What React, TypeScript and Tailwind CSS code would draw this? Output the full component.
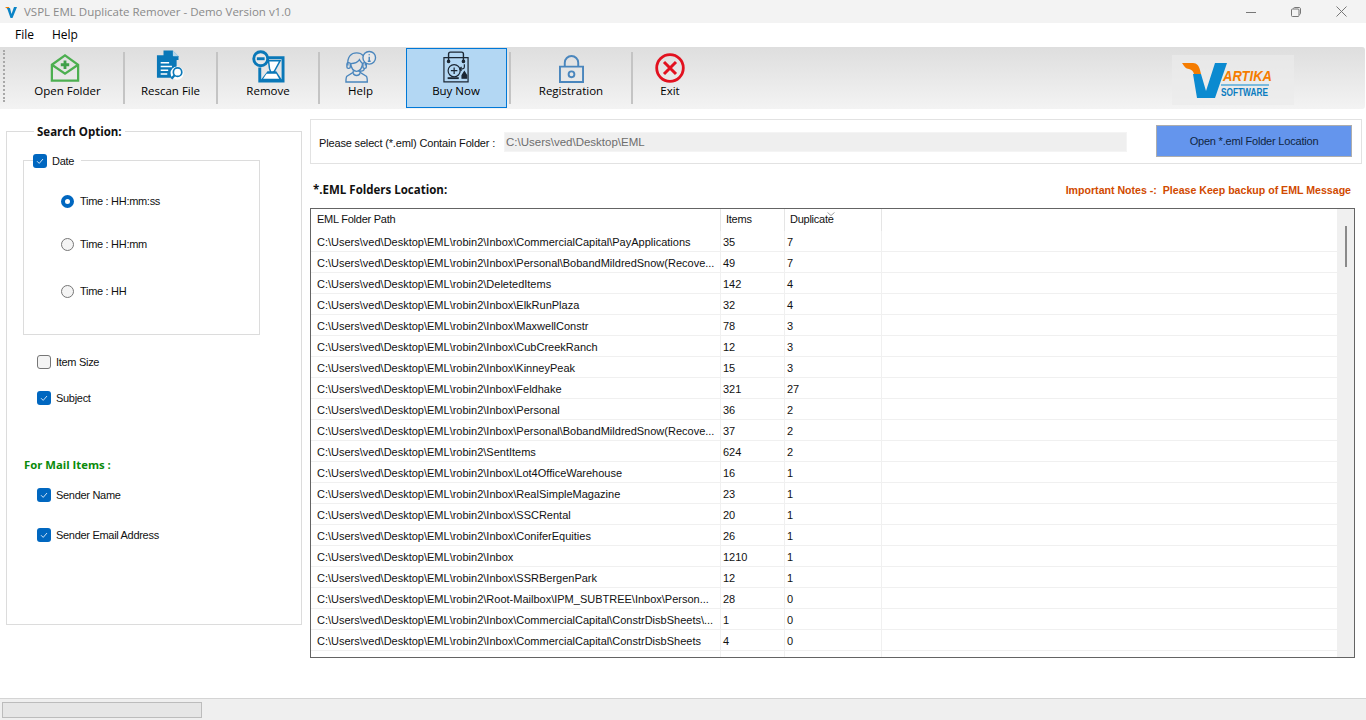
import type { ReactNode } from 'react';

const ROOT = 'C:\\Users\\ved\\Desktop\\EML\\robin2\\';

const ROWS: [string, string, string][] = [
  ['Inbox\\CommercialCapital\\PayApplications', '35', '7'],
  ['Inbox\\Personal\\BobandMildredSnow(Recove...', '49', '7'],
  ['DeletedItems', '142', '4'],
  ['Inbox\\ElkRunPlaza', '32', '4'],
  ['Inbox\\MaxwellConstr', '78', '3'],
  ['Inbox\\CubCreekRanch', '12', '3'],
  ['Inbox\\KinneyPeak', '15', '3'],
  ['Inbox\\Feldhake', '321', '27'],
  ['Inbox\\Personal', '36', '2'],
  ['Inbox\\Personal\\BobandMildredSnow(Recove...', '37', '2'],
  ['SentItems', '624', '2'],
  ['Inbox\\Lot4OfficeWarehouse', '16', '1'],
  ['Inbox\\RealSimpleMagazine', '23', '1'],
  ['Inbox\\SSCRental', '20', '1'],
  ['Inbox\\ConiferEquities', '26', '1'],
  ['Inbox', '1210', '1'],
  ['Inbox\\SSRBergenPark', '12', '1'],
  ['Root-Mailbox\\IPM_SUBTREE\\Inbox\\Person...', '28', '0'],
  ['Inbox\\CommercialCapital\\ConstrDisbSheets\\...', '1', '0'],
  ['Inbox\\CommercialCapital\\ConstrDisbSheets', '4', '0'],
];

function AppLogo() {
  return (
    <svg width="14" height="14" viewBox="0 0 14 14" className="ml-[4px]">
      <path d="M1 2h4l1 3-1 0z" fill="#f57c00" />
      <path d="M3 3h3l1.500 6L10 2h3L8.500 13H6.500z" fill="#0b84c6" />
    </svg>
  );
}

function OpenFolderIcon() {
  return (
    <svg width="30" height="30" viewBox="0 0 32 32" fill="none" stroke="#4caf50" strokeWidth="2.400" className="mr-[6px]">
      <path d="M2 12.500 16 2.500l14 10v17H2z" />
      <path d="M2 12.500 16 22l14-9.500" />
      <path d="M16 8v9M11.500 12.500h9" strokeWidth="3" stroke="#3f9f4a" />
    </svg>
  );
}

function RescanIcon() {
  return (
    <svg width="30" height="33" viewBox="0 0 32 34">
      <path d="M8 0h10l6 6v4H8z" fill="#0a78b8" />
      <path d="M18 0l6 6h-6z" fill="#fff" opacity="0.7" />
      <path d="M1 5h16l5 5v19H1z" fill="#0a78b8" />
      <path d="M5 13h9M5 17h12M5 21h8M5 25h7" stroke="#fff" strokeWidth="1.800" />
      <circle cx="22.500" cy="24" r="7" fill="#fff" />
      <circle cx="23" cy="23" r="4.500" fill="none" stroke="#0a78b8" strokeWidth="1.800" />
      <path d="M19.500 26.500 16.500 30" stroke="#0a78b8" strokeWidth="2.400" />
    </svg>
  );
}

function RemoveIcon() {
  return (
    <svg width="33" height="33" viewBox="0 0 34 34" fill="none">
      <path d="M12 8h20v24H8V18" stroke="#0a78b8" strokeWidth="3" />
      <path d="M17 11h12l-6 11-3 3-2-6z" fill="#fff" stroke="#0a78b8" strokeWidth="1.500" />
      <path d="M9 31l7-9h9l6 9z" fill="#0a78b8" />
      <path d="M15 24.500h10l3 5H11.500z" fill="#fff" />
      <circle cx="9" cy="9" r="7.200" fill="#e9e9e9" stroke="#0a78b8" strokeWidth="3" />
      <path d="M5 9h8" stroke="#0a78b8" strokeWidth="3" />
    </svg>
  );
}

function HelpIcon() {
  return (
    <svg width="33" height="33" viewBox="0 0 34 34" fill="none" stroke="#4a86bd" strokeWidth="1.400">
      <path d="M4 16C3 6 8 3 13 3s10 3 9 13" />
      <path d="M7 14c3 0 7-1 9-4 1 2 2 3 3 4 0 5-3 8-6 8s-6-3-6-8z" />
      <rect x="3" y="13" width="3.500" height="6" rx="1.500" />
      <rect x="19.500" y="13" width="3.500" height="6" rx="1.500" />
      <path d="M21 19c0 2-2 3-6 3" />
      <path d="M9.500 21v2L3 27c-1 1-1 4-1 6h22c0-2 0-5-1-6l-6.500-4v-2" />
      <path d="M9.500 24c1 3 6 3 7 0" />
      <circle cx="26" cy="8" r="6.500" fill="#e9e9e9" />
      <path d="M26 7v4.500M26 4.500v1M24.500 11.500h3" strokeWidth="1.500" />
    </svg>
  );
}

function BuyNowIcon() {
  return (
    <svg width="26" height="32" viewBox="0 0 28 34" fill="none" stroke="#1c2733" strokeWidth="1.300">
      <path d="M1 7h26v26H1z" />
      <path d="M6 11V3c0-1 1-2 2-2h12c1 0 2 1 2 2v8" strokeWidth="1.500" />
      <circle cx="6" cy="11" r="1.300" fill="#1c2733" />
      <circle cx="22" cy="11" r="1.300" fill="#1c2733" />
      <circle cx="12" cy="21" r="6.500" />
      <path d="M12 17.500v7M8.500 21h7" />
      <path d="M23 14v3c0 1-1 2-2 2h-3M20 17l-2 2 2 2" />
      <path d="M23 22l2.500 4v3h-5v-3z" fill="#1c2733" />
      <path d="M5 29h12" strokeWidth="2" />
    </svg>
  );
}

function LockIcon() {
  return (
    <svg width="25" height="28" viewBox="0 0 26 29" fill="none" stroke="#4a86bd" strokeWidth="2">
      <path d="M1 12h24v16H1z" />
      <path d="M6 12V8a7 7 0 0 1 14 0v4" />
      <circle cx="13" cy="20" r="3" />
    </svg>
  );
}

function ExitIcon() {
  return (
    <svg width="30" height="30" viewBox="0 0 30 30" fill="none" stroke="#e2111f" strokeWidth="2.800">
      <circle cx="15" cy="15" r="13.300" />
      <path d="M9 9l12 12M21 9 9 21" strokeWidth="3" />
    </svg>
  );
}

function VartikaLogo() {
  return (
    <svg width="122" height="50" viewBox="0 0 122 50">
      <rect width="122" height="50" fill="#ebebeb" opacity="0.7" />
      <path d="M10 8h11c4 0 6 3 7 7l1 4h-7c-1-3-2-4-5-5-3 0-5-3-7-6z" fill="#f57c00" />
      <path d="M21 19h8l5 17L43 8h12L43 43H25z" fill="#0b8ad0" />
      <text x="51" y="26" fontFamily="'Liberation Sans', sans-serif" fontSize="14.500" fontWeight="700" fontStyle="italic" fill="#f57c00" textLength="49" lengthAdjust="spacingAndGlyphs">ARTIKA</text>
      <path d="M49 30h48" stroke="#0b8ad0" strokeWidth="1.200" />
      <text x="49" y="41" fontFamily="'Liberation Sans', sans-serif" fontSize="11" fontWeight="700" fill="#0b7cc0" textLength="47" lengthAdjust="spacingAndGlyphs">SOFTWARE</text>
    </svg>
  );
}

function Tool({ label, icon, className }: { label: string; icon: ReactNode; className: string }) {
  return (
    <div className={`flex h-full shrink-0 flex-col items-center ${className}`}>
      <div className="flex h-[36px] items-end">{icon}</div>
      <span className="font-['Open_Sans',sans-serif] text-[11.500px] leading-[16px] text-black">{label}</span>
    </div>
  );
}

function Sep() {
  return <div className="my-[5px] h-[52px] w-[2px] shrink-0 bg-[#c4c4c4]" />;
}

function Check({ on, label }: { on: boolean; label: string }) {
  return (
    <div className="flex h-[16px] items-center gap-[5px]">
      <span
        className={
          on
            ? 'flex h-[14px] w-[14px] items-center justify-center rounded-[3px] bg-[#0067c0]'
            : 'h-[14px] w-[14px] rounded-[3px] border border-[#767676] bg-[#f4f4f4]'
        }
      >
        {on && (
          <svg width="10" height="10" viewBox="0 0 10 10" fill="none" stroke="#cfe3f5" strokeWidth="1">
            <path d="M2 5.200 4.200 7.400 8 3" />
          </svg>
        )}
      </span>
      <span className="text-[11px] leading-[16px] tracking-[-0.3px] text-[#111]">{label}</span>
    </div>
  );
}

function Radio({ on, label, className }: { on: boolean; label: string; className: string }) {
  return (
    <div className={`ml-[37px] flex h-[16px] items-center gap-[6px] ${className}`}>
      <span
        className={
          on
            ? 'h-[13px] w-[13px] rounded-full border-[4px] border-[#0067c0] bg-white'
            : 'h-[13px] w-[13px] rounded-full border border-[#767676] bg-[#f4f4f4]'
        }
      />
      <span className="text-[11px] leading-[16px] tracking-[-0.3px] text-[#111]">{label}</span>
    </div>
  );
}

function SearchPanel() {
  return (
    <fieldset className="ml-[6px] h-[502px] w-[296px] shrink-0 border border-[#dcdcdc] pl-[16px]">
      <legend className="ml-[11px] translate-y-[1px] px-[3px] font-['Open_Sans',sans-serif] text-[11.500px] font-bold leading-[16px] text-[#111]">
        Search Option:
      </legend>
      <fieldset className="mt-[13px] h-[183px] w-[237px] border border-[#dcdcdc]">
        <legend className="ml-[9px] translate-y-[1px] pr-[7px]">
          <Check on label="Date" />
        </legend>
        <Radio on label="Time : HH:mm:ss" className="mt-[25px]" />
        <Radio on={false} label="Time : HH:mm" className="mt-[27px]" />
        <Radio on={false} label="Time : HH" className="mt-[31px]" />
      </fieldset>
      <div className="ml-[14px] mt-[19px]">
        <Check on={false} label="Item Size" />
      </div>
      <div className="ml-[14px] mt-[20px]">
        <Check on label="Subject" />
      </div>
      <div className="ml-[1px] mt-[51px] font-['Open_Sans',sans-serif] text-[11.300px] font-bold leading-[16px] text-[#0a8a0a]">
        For Mail Items :
      </div>
      <div className="ml-[14px] mt-[14px]">
        <Check on label="Sender Name" />
      </div>
      <div className="ml-[14px] mt-[24px]">
        <Check on label="Sender Email Address" />
      </div>
    </fieldset>
  );
}

function Row({ path, items, dup }: { path: string; items: string; dup: string }) {
  return (
    <div className="flex h-[21px] shrink-0 border-b border-[#f0f0f0] text-[11px] leading-[23px] text-[#111]">
      <div className="w-[410px] shrink-0 whitespace-nowrap border-r border-[#f0f0f0] pl-[6px]">{path}</div>
      <div className="w-[64px] shrink-0 border-r border-[#f0f0f0] pl-[2px]">{items}</div>
      <div className="w-[97px] shrink-0 border-r border-[#f0f0f0] pl-[2px]">{dup}</div>
    </div>
  );
}

function FolderTable() {
  return (
    <div className="mt-[10px] flex h-[450px] w-[1045px] border border-[#646464] bg-white">
      <div className="flex min-w-0 flex-1 flex-col overflow-hidden">
        <div className="flex h-[22px] shrink-0 text-[11px] leading-[21px] tracking-[-0.25px] text-[#111]">
          <div className="w-[410px] shrink-0 border-r border-[#e5e5e5] pl-[6px]">EML Folder Path</div>
          <div className="w-[64px] shrink-0 border-r border-[#e5e5e5] pl-[5px]">Items</div>
          <div className="relative w-[97px] shrink-0 border-r border-[#e5e5e5] pl-[5px]">
            Duplicate
            <svg width="8" height="4" viewBox="0 0 8 4" fill="none" stroke="#8a8a8a" className="absolute left-[42px] top-[3px]">
              <path d="M0.500 0.500 4 3.500 7.500 0.500" strokeWidth="0.800" />
            </svg>
          </div>
        </div>
        {ROWS.map((r, i) => (
          <Row key={i} path={ROOT + r[0]} items={r[1]} dup={r[2]} />
        ))}
        <Row path="" items="" dup="" />
      </div>
      <div className="flex w-[17px] shrink-0 justify-center bg-[#f0f0f0] pt-[17px]">
        <div className="h-[41px] w-[2px] bg-[#8a8a8a]" />
      </div>
    </div>
  );
}

export default function App() {
  return (
    <div className="flex h-[720px] w-[1366px] flex-col overflow-hidden bg-white font-['Liberation_Sans',sans-serif]">
      {/* title bar */}
      <div className="flex h-[23px] shrink-0 items-center bg-[#f3f3f3]">
        <AppLogo />
        <span className="ml-[6px] font-['Open_Sans',sans-serif] text-[11.500px] text-[#8a8a8a]">
          VSPL EML Duplicate Remover - Demo Version v1.0
        </span>
        <div className="ml-auto flex items-center gap-[35px] pr-[19px]">
          <svg width="10" height="10" viewBox="0 0 10 10" stroke="#777" fill="none">
            <path d="M0 5.500h10" />
          </svg>
          <svg width="10" height="10" viewBox="0 0 10 10" stroke="#777" fill="none">
            <rect x="0.500" y="2" width="7.500" height="7.500" rx="1" />
            <path d="M2.500 1.500c0-.5.500-1 1-1h4.500c1 0 1.500.5 1.500 1.500v4.500c0 .5-.5 1-1 1" />
          </svg>
          <svg width="11" height="11" viewBox="0 0 11 11" stroke="#777" fill="none">
            <path d="M0.500 0.500l10 10M10.500 0.500l-10 10" />
          </svg>
        </div>
      </div>

      {/* menu */}
      <div className="flex h-[24px] shrink-0 items-center gap-[18px] pl-[15px] font-['Open_Sans',sans-serif] text-[12px] text-black">
        <span>File</span>
        <span>Help</span>
      </div>

      {/* toolbar */}
      <div className="flex h-[62px] w-[1365px] shrink-0 items-stretch rounded-r-[3px] bg-gradient-to-b from-[#dedede] to-[#f3f3f3]">
        <div className="my-[3px] ml-[3px] h-[52px] w-[2px] shrink-0 border-l-2 border-dotted border-[#a8a8a8]" />
        <Tool label="Open Folder" icon={<OpenFolderIcon />} className="w-[118px] pl-[7px]" />
        <Sep />
        <Tool label="Rescan File" icon={<RescanIcon />} className="w-[91px]" />
        <Sep />
        <Tool label="Remove" icon={<RemoveIcon />} className="w-[100px]" />
        <Sep />
        <Tool label="Help" icon={<HelpIcon />} className="w-[81px]" />
        <div className="ml-[5px] mt-[1px] h-[60px] w-[101px] shrink-0 border border-[#0078d7] bg-[#b3d7f3]">
          <Tool label="Buy Now" icon={<BuyNowIcon />} className="-mt-[2px] w-[98px]" />
        </div>
        <div className="ml-[2px] flex">
          <Sep />
        </div>
        <Tool label="Registration" icon={<LockIcon />} className="w-[120px]" />
        <Sep />
        <Tool label="Exit" icon={<ExitIcon />} className="w-[74px]" />
        <div className="ml-[465px] mt-[8px]">
          <VartikaLogo />
        </div>
      </div>

      {/* main */}
      <div className="flex min-h-0 flex-1 pt-[14px]">
        <SearchPanel />
        <div className="ml-[8px] flex flex-col">
          <div className="-mt-[4px] flex h-[45px] w-[1052px] items-center border border-[#e2e2e2] pl-[8px] pr-[9px] text-[#111]">
            <span className="w-[185px] shrink-0 whitespace-nowrap pt-[3px] text-[11px] tracking-[-0.16px]">
              Please select (*.eml) Contain Folder :
            </span>
            <div className="h-[20px] w-[623px] shrink-0 border border-[#f4f4f4] bg-[#efefef] pl-[1px] text-[11.500px] leading-[18px] text-[#6d6d6d]">
              C:\Users\ved\Desktop\EML
            </div>
            <button className="-mt-[1px] ml-auto h-[32px] w-[196px] border border-[#adadad] bg-[#6495ed] text-[11px] tracking-[-0.2px] text-[#10253f]">
              Open *.eml Folder Location
            </button>
          </div>
          <div className="mt-[18px] flex w-[1041px] items-center justify-between pl-[3px]">
            <span className="font-['Open_Sans',sans-serif] text-[11.500px] font-bold leading-[16px] text-[#111]">
              *.EML Folders Location:
            </span>
            <span className="text-[10.600px] font-bold leading-[16px] text-[#d14a00]">
              Important Notes -:&nbsp; Please Keep backup of EML Message
            </span>
          </div>
          <FolderTable />
        </div>
      </div>

      {/* status bar */}
      <div className="flex h-[22px] shrink-0 items-center border-t border-[#d4d4d4] bg-[#efefef] pl-[2px]">
        <div className="h-[16px] w-[200px] border border-[#bcbcbc] bg-[#e6e6e6]" />
      </div>
    </div>
  );
}
